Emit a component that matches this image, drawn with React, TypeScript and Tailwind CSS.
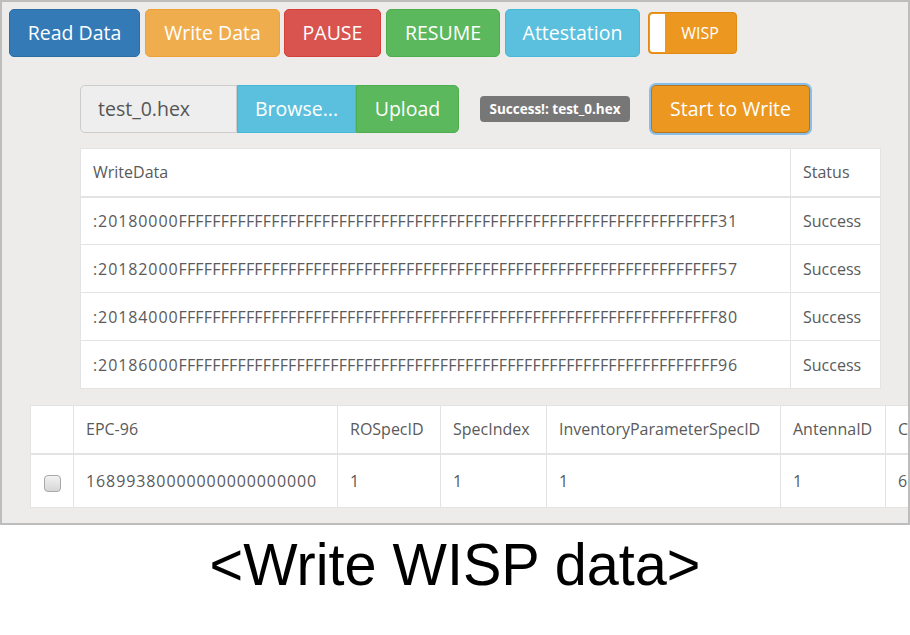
import React from 'react';

const FONT = { fontFamily: '"Open Sans", "Noto Sans", sans-serif' };

const writeRows = [
  { addr: ':20180000', sum: '31', status: 'Success' },
  { addr: ':20182000', sum: '57', status: 'Success' },
  { addr: ':20184000', sum: '80', status: 'Success' },
  { addr: ':20186000', sum: '96', status: 'Success' },
];

function TopButton({ label, className }: { label: string; className: string }) {
  return (
    <button
      className={`h-12 rounded-[5px] border text-[19.5px] text-white leading-none ${className}`}
    >
      {label}
    </button>
  );
}

function WispToggle() {
  return (
    <div className="ml-2 mt-[3px] flex h-[42px] w-[89px] rounded-[4px] border border-[#e08a14] bg-[#ec971f] p-[1px]">
      <div className="h-full w-[15px] rounded-l-[3px] bg-white" />
      <div className="flex flex-1 items-center justify-center text-[16px] text-white">WISP</div>
    </div>
  );
}

export default function App() {
  return (
    <div className="h-[635px] w-[910px] bg-white" style={FONT}>
      <div className="flex h-[525px] flex-col overflow-hidden border-2 border-[#bdbdbd] bg-[#edecea]">
        {/* top action buttons */}
        <div className="flex items-start pl-[7px] pt-[7px]">
          <TopButton label="Read Data" className="w-[131px] border-[#2e6da4] bg-[#337ab7]" />
          <TopButton label="Write Data" className="ml-[5px] w-[135px] border-[#eea236] bg-[#f0ad4e]" />
          <TopButton label="PAUSE" className="ml-[4px] w-[97px] border-[#d43f3a] bg-[#d9534f]" />
          <TopButton label="RESUME" className="ml-[5px] w-[114px] border-[#4cae4c] bg-[#5cb85c]" />
          <TopButton label="Attestation" className="ml-[5px] w-[135px] border-[#46b8da] bg-[#5bc0de]" />
          <WispToggle />
        </div>

        {/* file upload row */}
        <div className="mt-7 flex items-center pl-[78px]">
          <div className="flex h-12 w-[379px]">
            <div className="flex w-[157px] items-center rounded-l-[5px] border border-[#cccccc] bg-[#eeeeee] pl-[17px] text-[19.5px] text-[#555555]">
              test_0.hex
            </div>
            <div className="flex w-[119px] items-center justify-center border border-[#46b8da] bg-[#5bc0de] text-[19.5px] text-white">
              Browse...
            </div>
            <div className="flex w-[103px] items-center justify-center rounded-r-[5px] border border-[#4cae4c] bg-[#5cb85c] text-[19.5px] text-white">
              Upload
            </div>
          </div>
          <span className="ml-[21px] flex h-[26px] w-[150px] items-center justify-center rounded-[4px] bg-[#777777] text-[13.5px] font-bold text-white">
            Success!: test_0.hex
          </span>
          <button className="ml-[21px] h-12 w-[159px] rounded-[5px] border border-[#b8741a] bg-[#ec971f] text-[19.5px] text-white shadow-[0_0_0_2px_rgba(102,175,233,0.75)]">
            Start to Write
          </button>
        </div>

        {/* write data table */}
        <div className="ml-[78px] mt-[15px] w-[800px]">
          <table className="w-full table-fixed border-collapse bg-white text-[16px] text-[#5a5a5a]">
            <colgroup>
              <col className="w-[710px]" />
              <col className="w-[90px]" />
            </colgroup>
            <thead>
              <tr className="h-12">
                <th className="border border-b-2 border-[#e3e3e3] pl-3 text-left font-normal">WriteData</th>
                <th className="border border-b-2 border-[#e3e3e3] pl-3 text-left font-normal">Status</th>
              </tr>
            </thead>
            <tbody>
              {writeRows.map((r) => (
                <tr key={r.addr} className="h-12">
                  <td className="overflow-hidden whitespace-nowrap border border-[#e3e3e3] pl-3">
                    <span className="tracking-[0.9px]">{r.addr}</span>
                    <span className="tracking-[0.17px]">{'F'.repeat(64)}</span>
                    <span className="tracking-[0.9px]">{r.sum}</span>
                  </td>
                  <td className="border border-[#e3e3e3] pl-3">{r.status}</td>
                </tr>
              ))}
            </tbody>
          </table>
        </div>

        {/* inventory table */}
        <div className="ml-[28px] mt-4">
          <table className="w-[1080px] table-fixed border-collapse bg-white text-[16px] text-[#5a5a5a]">
            <colgroup>
              <col className="w-[43px]" />
              <col className="w-[264px]" />
              <col className="w-[103px]" />
              <col className="w-[106px]" />
              <col className="w-[234px]" />
              <col className="w-[105px]" />
              <col className="w-[225px]" />
            </colgroup>
            <thead>
              <tr className="h-12">
                <th className="border border-b-2 border-[#e3e3e3]" />
                {['EPC-96', 'ROSpecID', 'SpecIndex', 'InventoryParameterSpecID', 'AntennaID', 'ChannelIndex'].map((h) => (
                  <th key={h} className="whitespace-nowrap border border-b-2 border-[#e3e3e3] pl-3 text-left font-normal">
                    {h}
                  </th>
                ))}
              </tr>
            </thead>
            <tbody>
              <tr className="h-[54px]">
                <td className="border border-[#e3e3e3] text-center">
                  <span className="mt-[3px] inline-block h-[17px] w-[17px] rounded-[4px] border border-[#a9a9a9] bg-gradient-to-b from-[#f2f2f2] to-[#d6d6d6] align-middle" />
                </td>
                <td className="border border-[#e3e3e3] pl-3 tracking-[0.9px]">16899380000000000000000</td>
                <td className="border border-[#e3e3e3] pl-3">1</td>
                <td className="border border-[#e3e3e3] pl-3">1</td>
                <td className="border border-[#e3e3e3] pl-3">1</td>
                <td className="border border-[#e3e3e3] pl-3">1</td>
                <td className="border border-[#e3e3e3] pl-3">6</td>
              </tr>
            </tbody>
          </table>
        </div>
      </div>

      <div
        className="mt-[10px] scale-x-[0.96] text-center text-[60px] leading-[60px] text-black"
        style={{ fontFamily: '"Liberation Sans", Arial, sans-serif' }}
      >
        &lt;Write WISP data&gt;
      </div>
    </div>
  );
}
